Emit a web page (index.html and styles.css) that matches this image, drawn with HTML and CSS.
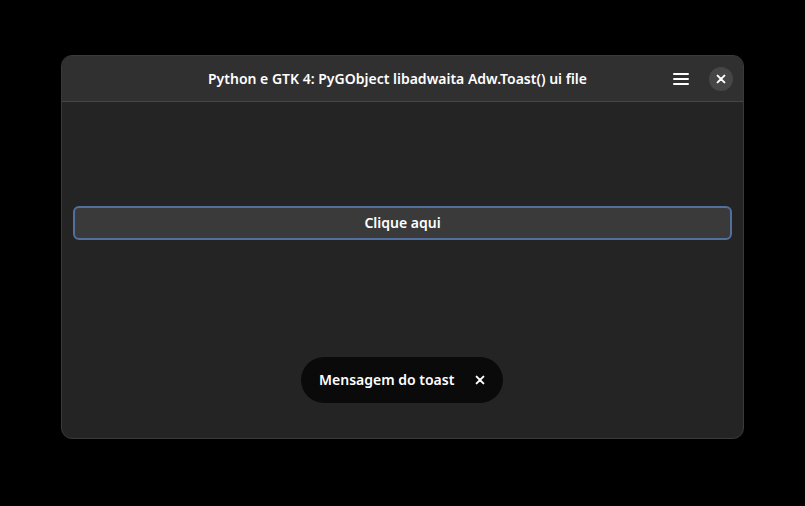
FILE: index.html
```html
<!DOCTYPE html>
<html lang="pt-BR">
<head>
<meta charset="utf-8">
<title>Adw.Toast</title>
<link rel="stylesheet" href="styles.css">
</head>
<body>
<main class="window">
  <header class="headerbar">
    <h1 class="title">Python e GTK 4: PyGObject libadwaita Adw.Toast() ui file</h1>
    <div class="controls">
      <button class="icon-button" aria-label="Menu"><svg width="16" height="16" viewBox="0 0 16 16"><path d="M1 3h14M1 8h14M1 13h14"/></svg></button>
      <button class="icon-button close" aria-label="Fechar"><svg width="16" height="16" viewBox="0 0 16 16"><path d="M4.6 4.6l6.8 6.8M11.4 4.6l-6.8 6.8"/></svg></button>
    </div>
  </header>
  <section class="content">
    <button class="action"><span class="action-label">Clique aqui</span></button>
  </section>
  <div class="toast" role="status">
    <span class="message">Mensagem do toast</span>
    <button class="icon-button" aria-label="Dispensar"><svg width="16" height="16" viewBox="0 0 16 16"><path d="M4.6 4.6l6.8 6.8M11.4 4.6l-6.8 6.8"/></svg></button>
  </div>
</main>
</body>
</html>
```
FILE: styles.css
```css
* { box-sizing: border-box; }
body {
  margin: 0;
  height: 506px;
  padding: 55px 61px 0;
  background: #000;
  color: #fff;
  font: 600 14px/20px "Noto Sans", sans-serif;
}
button {
  margin: 0;
  padding: 0;
  border: 0;
  background: none;
  color: inherit;
  font: inherit;
}
.window {
  position: relative;
  height: 384px;
  border: 1px solid #3a3a3a;
  border-radius: 11px;
  background: #242424;
  overflow: hidden;
}
.headerbar {
  display: grid;
  grid-template-columns: 1fr auto 1fr;
  align-items: center;
  height: 46px;
  padding-right: 10px;
  background: #303030;
  border-bottom: 1px solid #464646;
}
.title {
  grid-column: 2;
  margin: 0;
  font-size: 14px;
  font-weight: 600;
  white-space: nowrap;
}
.controls {
  display: flex;
  justify-content: flex-end;
  gap: 16px;
}
.icon-button {
  display: grid;
  place-items: center;
  width: 24px;
  height: 24px;
  border-radius: 50%;
}
.icon-button svg {
  fill: none;
  stroke: #fff;
  stroke-width: 2;
  stroke-linecap: round;
}
.close { background: #464646; }
.content { padding: 104px 11px 0; }
.action {
  display: block;
  width: 100%;
  height: 34px;
  border: 2px solid #526f9d;
  border-radius: 6px;
  background: #3a3a3a;
}
.toast {
  position: absolute;
  left: 239px;
  top: 301px;
  display: flex;
  align-items: center;
  justify-content: space-between;
  width: 202px;
  height: 46px;
  padding: 0 11px 0 18px;
  border-radius: 23px;
  background: #0a0a0a;
}
```
